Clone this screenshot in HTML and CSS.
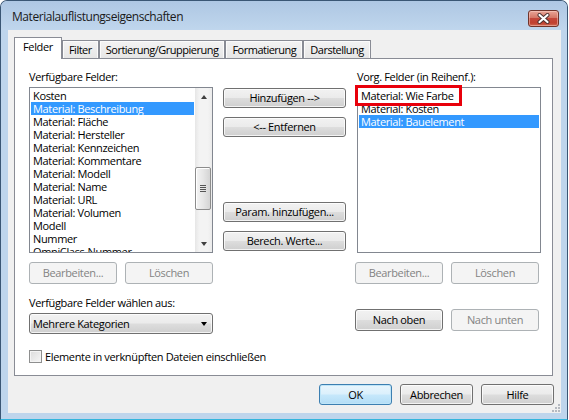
FILE: index.html
```html
<!DOCTYPE html>
<html lang="de">
<head>
<meta charset="utf-8">
<title>Materialauflistungseigenschaften</title>
<link rel="stylesheet" href="styles.css">
</head>
<body>
<div class="window">
  <header class="titlebar">
    <span class="title">Materialauflistungseigenschaften</span>
    <button class="close-btn" type="button" aria-label="Schließen">
      <svg width="13" height="11" viewBox="0 0 13 11"><path d="M2.5 2 L10.5 9 M10.5 2 L2.5 9" stroke="#4a3030" stroke-width="4" stroke-linecap="round"/><path d="M2.5 2 L10.5 9 M10.5 2 L2.5 9" stroke="#ffffff" stroke-width="2.2" stroke-linecap="round"/></svg>
    </button>
  </header>
  <main class="client">
    <nav class="tabs">
      <span class="tab active">Felder</span>
      <span class="tab">Filter</span>
      <span class="tab">Sortierung/Gruppierung</span>
      <span class="tab">Formatierung</span>
      <span class="tab">Darstellung</span>
    </nav>
    <section class="panel">
      <div class="fields">
        <div class="label">Verfügbare Felder:</div>
        <div></div>
        <div class="label">Vorg. Felder (in Reihenf.):</div>

        <div class="listbox">
          <ul class="items">
            <li>Kosten</li>
            <li class="sel">Material: Beschreibung</li>
            <li>Material: Fläche</li>
            <li>Material: Hersteller</li>
            <li>Material: Kennzeichen</li>
            <li>Material: Kommentare</li>
            <li>Material: Modell</li>
            <li>Material: Name</li>
            <li>Material: URL</li>
            <li>Material: Volumen</li>
            <li>Modell</li>
            <li>Nummer</li>
            <li>OmniClass-Nummer</li>
          </ul>
          <div class="vscroll">
            <span class="arrow up"></span>
            <span class="track"><span class="thumb"><span class="grip"></span></span></span>
            <span class="arrow down"></span>
          </div>
        </div>

        <div class="mid">
          <div class="stack">
            <button class="btn" type="button">Hinzufügen --&gt;</button>
            <button class="btn" type="button">&lt;-- Entfernen</button>
          </div>
          <div class="stack">
            <button class="btn" type="button">Param. hinzufügen...</button>
            <button class="btn" type="button">Berech. Werte...</button>
          </div>
        </div>

        <div class="listbox chosen">
          <ul class="items">
            <li>Material: Wie Farbe</li>
            <li>Material: Kosten</li>
            <li class="sel">Material: Bauelement</li>
          </ul>
          <span class="annot"></span>
        </div>

        <div class="pair row3"><button class="btn" type="button" disabled>Bearbeiten...</button><button class="btn" type="button" disabled>Löschen</button></div>
        <div></div>
        <div class="pair shifted row3"><button class="btn" type="button" disabled>Bearbeiten...</button><button class="btn" type="button" disabled>Löschen</button></div>

        <div class="source">
          <div class="label">Verfügbare Felder wählen aus:</div>
          <div class="combo"><span>Mehrere Kategorien</span><span class="caret"></span></div>
        </div>
        <div></div>
        <div class="pair shifted order"><button class="btn" type="button">Nach oben</button><button class="btn" type="button" disabled>Nach unten</button></div>

        <label class="check"><span class="box"></span><span>Elemente in verknüpften Dateien einschließen</span></label>
      </div>
    </section>
    <footer class="actions">
      <button class="btn default" type="button">OK</button>
      <button class="btn" type="button">Abbrechen</button>
      <button class="btn" type="button">Hilfe</button>
      <svg class="sizegrip" width="8" height="8" viewBox="0 0 8 8"><g fill="#b4b9c0"><rect x="6" y="0" width="2" height="2"/><rect x="3" y="3" width="2" height="2"/><rect x="6" y="3" width="2" height="2"/><rect x="0" y="6" width="2" height="2"/><rect x="3" y="6" width="2" height="2"/><rect x="6" y="6" width="2" height="2"/></g></svg>
    </footer>
  </main>
</div>
</body>
</html>
```

FILE: styles.css
```css
* { box-sizing: border-box; }
html, body { margin: 0; padding: 0; }
body {
  width: 569px;
  height: 420px;
  overflow: hidden;
  background: #ffffff;
  font-family: "Open Sans", "Noto Sans", sans-serif;
  font-size: 11px;
  letter-spacing: -0.35px;
  color: #000;
}
ul { list-style: none; margin: 0; padding: 0; }
button { font: inherit; letter-spacing: inherit; color: inherit; margin: 0; }

.window {
  width: 568px;
  height: 420px;
  border: 1px solid #3a5674;
  border-bottom-color: #33b5dc;
  border-radius: 7px 7px 0 0;
  background: #bed5ec;
  display: flex;
  flex-direction: column;
}

.titlebar {
  height: 29px;
  flex: none;
  display: flex;
  justify-content: space-between;
  align-items: flex-start;
  padding: 0 8px 0 11px;
  border-radius: 6px 6px 0 0;
  background: linear-gradient(#aec7e3, #bcd3eb 80%, #c0d6ed);
}
.title {
  margin-top: 8px;
  font-size: 12px;
  line-height: 16px;
  letter-spacing: -0.45px;
  color: #1a1a1a;
}
.close-btn {
  margin-top: 9px;
  width: 31px;
  height: 17px;
  padding: 0;
  border: 1px solid #70342b;
  border-radius: 3px;
  background: linear-gradient(#e9a597, #d57766 45%, #c4473a 50%, #c0402f 80%, #d06a55);
  box-shadow: inset 0 0 0 1px rgba(255, 220, 210, 0.45);
  display: flex;
  align-items: center;
  justify-content: center;
}

.client {
  margin: 0 6px 0 7px;
  height: 383px;
  flex: none;
  background: #f0f0f0;
  padding: 7px 8px 8px 6px;
  display: flex;
  flex-direction: column;
  position: relative;
}

.tabs {
  display: flex;
  align-items: flex-end;
  height: 21px;
  flex: none;
}
.tab {
  height: 18px;
  padding: 0 6px;
  line-height: 17px;
  letter-spacing: -0.5px;
  border: 1px solid #898c95;
  border-bottom: none;
  background: linear-gradient(#f3f3f3, #e6e6e6);
  box-shadow: inset 1px 1px 0 #fbfbfb, inset -1px 0 0 #fbfbfb;
  white-space: nowrap;
}
.tab.active {
  height: 22px;
  margin-bottom: -1px;
  padding: 0 8px;
  letter-spacing: -0.35px;
  background: #fff;
  box-shadow: none;
  position: relative;
  z-index: 1;
}

.panel {
  height: 318px;
  flex: none;
  border: 1px solid #898c95;
  background: #fff;
  padding: 9px 0 0 14px;
}
.fields {
  display: grid;
  grid-template-columns: 184px 124px 184px;
  column-gap: 10px;
  align-items: start;
}
.label {
  line-height: 17px;
  height: 17px;
  margin-bottom: 2px;
  white-space: nowrap;
}

.listbox {
  height: 166px;
  border: 1px solid #828790;
  background: #fff;
  display: flex;
  position: relative;
}
.items {
  flex: 1;
  padding: 1px;
  overflow: hidden;
}
.items li {
  height: 13px;
  line-height: 13px;
  padding-left: 2px;
  white-space: nowrap;
}
.items li.sel {
  background: #3399ff;
  color: #fff;
}
.annot {
  position: absolute;
  left: -3px;
  top: -3px;
  width: 107px;
  height: 21px;
  border: 3px solid #e8000b;
}

.vscroll {
  width: 17px;
  flex: none;
  display: flex;
  flex-direction: column;
  background: linear-gradient(to right, #e6e6e6, #f3f3f3 25%, #f3f3f3 75%, #ebebeb);
}
.arrow {
  height: 17px;
  flex: none;
  display: flex;
  align-items: center;
  justify-content: center;
}
.arrow::before {
  content: "";
  border-left: 3.5px solid transparent;
  border-right: 3.5px solid transparent;
}
.arrow.up::before { border-bottom: 4px solid #404040; }
.arrow.down::before { border-top: 4px solid #404040; }
.track {
  flex: 1;
  display: flex;
  flex-direction: column;
}
.thumb {
  margin: 62px 1px 0 0;
  height: 43px;
  border: 1px solid #8c8c8c;
  border-radius: 2px;
  background: linear-gradient(to right, #f4f4f4, #e6e6e6 50%, #d4d4d4);
  box-shadow: inset 1px 1px 0 #fff;
  display: flex;
  align-items: center;
  justify-content: center;
}
.grip {
  width: 6px;
  height: 7px;
  background: repeating-linear-gradient(#555 0 1px, transparent 1px 2px);
}

.mid {
  height: 166px;
  display: flex;
  flex-direction: column;
  justify-content: space-between;
  padding: 1px 0 2px;
}
.stack {
  display: flex;
  flex-direction: column;
  gap: 9px;
}
.stack .btn {
  width: 123px;
  height: 20px;
}

.btn {
  height: 22px;
  padding: 0 4px;
  border: 1px solid #707070;
  border-radius: 3px;
  background: linear-gradient(#f2f2f2, #ebebeb 48%, #dddddd 52%, #cfcfcf);
  box-shadow: inset 0 0 0 1px rgba(255, 255, 255, 0.75);
  line-height: 18px;
  text-align: center;
  white-space: nowrap;
}
.btn:disabled {
  border-color: #adb2b5;
  background: #f4f4f4;
  box-shadow: none;
  color: #838383;
}
.btn.default {
  border-color: #3c7fb1;
  background: linear-gradient(#e9f6fd, #dbf0fc 48%, #c6e8fb 52%, #b3ddf6);
  box-shadow: inset 0 0 0 1px #bfe5f8;
}

.pair {
  display: flex;
  justify-content: space-between;
}
.pair .btn { width: 88px; }
.pair.shifted { margin-left: -2px; margin-right: 2px; }
.pair.row3 { margin-top: 9px; }

.source { margin-top: 10px; }
.combo {
  height: 21px;
  border: 1px solid #707070;
  border-radius: 3px;
  background: linear-gradient(#f2f2f2, #ebebeb 48%, #dddddd 52%, #cfcfcf);
  box-shadow: inset 0 0 0 1px rgba(255, 255, 255, 0.75);
  display: flex;
  align-items: center;
  justify-content: space-between;
  padding: 0 5px 0 3px;
  line-height: 18px;
}
.caret {
  border-left: 3.5px solid transparent;
  border-right: 3.5px solid transparent;
  border-top: 4px solid #000;
}
.pair.order {
  align-self: end;
  margin-bottom: 3px;
}

.check {
  grid-column: 1 / -1;
  margin-top: 16px;
  display: flex;
  align-items: center;
  gap: 3px;
  line-height: 13px;
}
.box {
  width: 13px;
  height: 13px;
  border: 1px solid #8e8f8f;
  background: linear-gradient(135deg, #dcdcdc, #f6f6f6);
  box-shadow: inset 0 0 0 1px #f4f4f4;
}

.actions {
  margin: 8px -1px 0 0;
  display: flex;
  justify-content: flex-end;
  gap: 8px;
}
.actions .btn {
  width: 73px;
  height: 21px;
}
.sizegrip {
  position: absolute;
  right: 1px;
  bottom: 1px;
}
```
